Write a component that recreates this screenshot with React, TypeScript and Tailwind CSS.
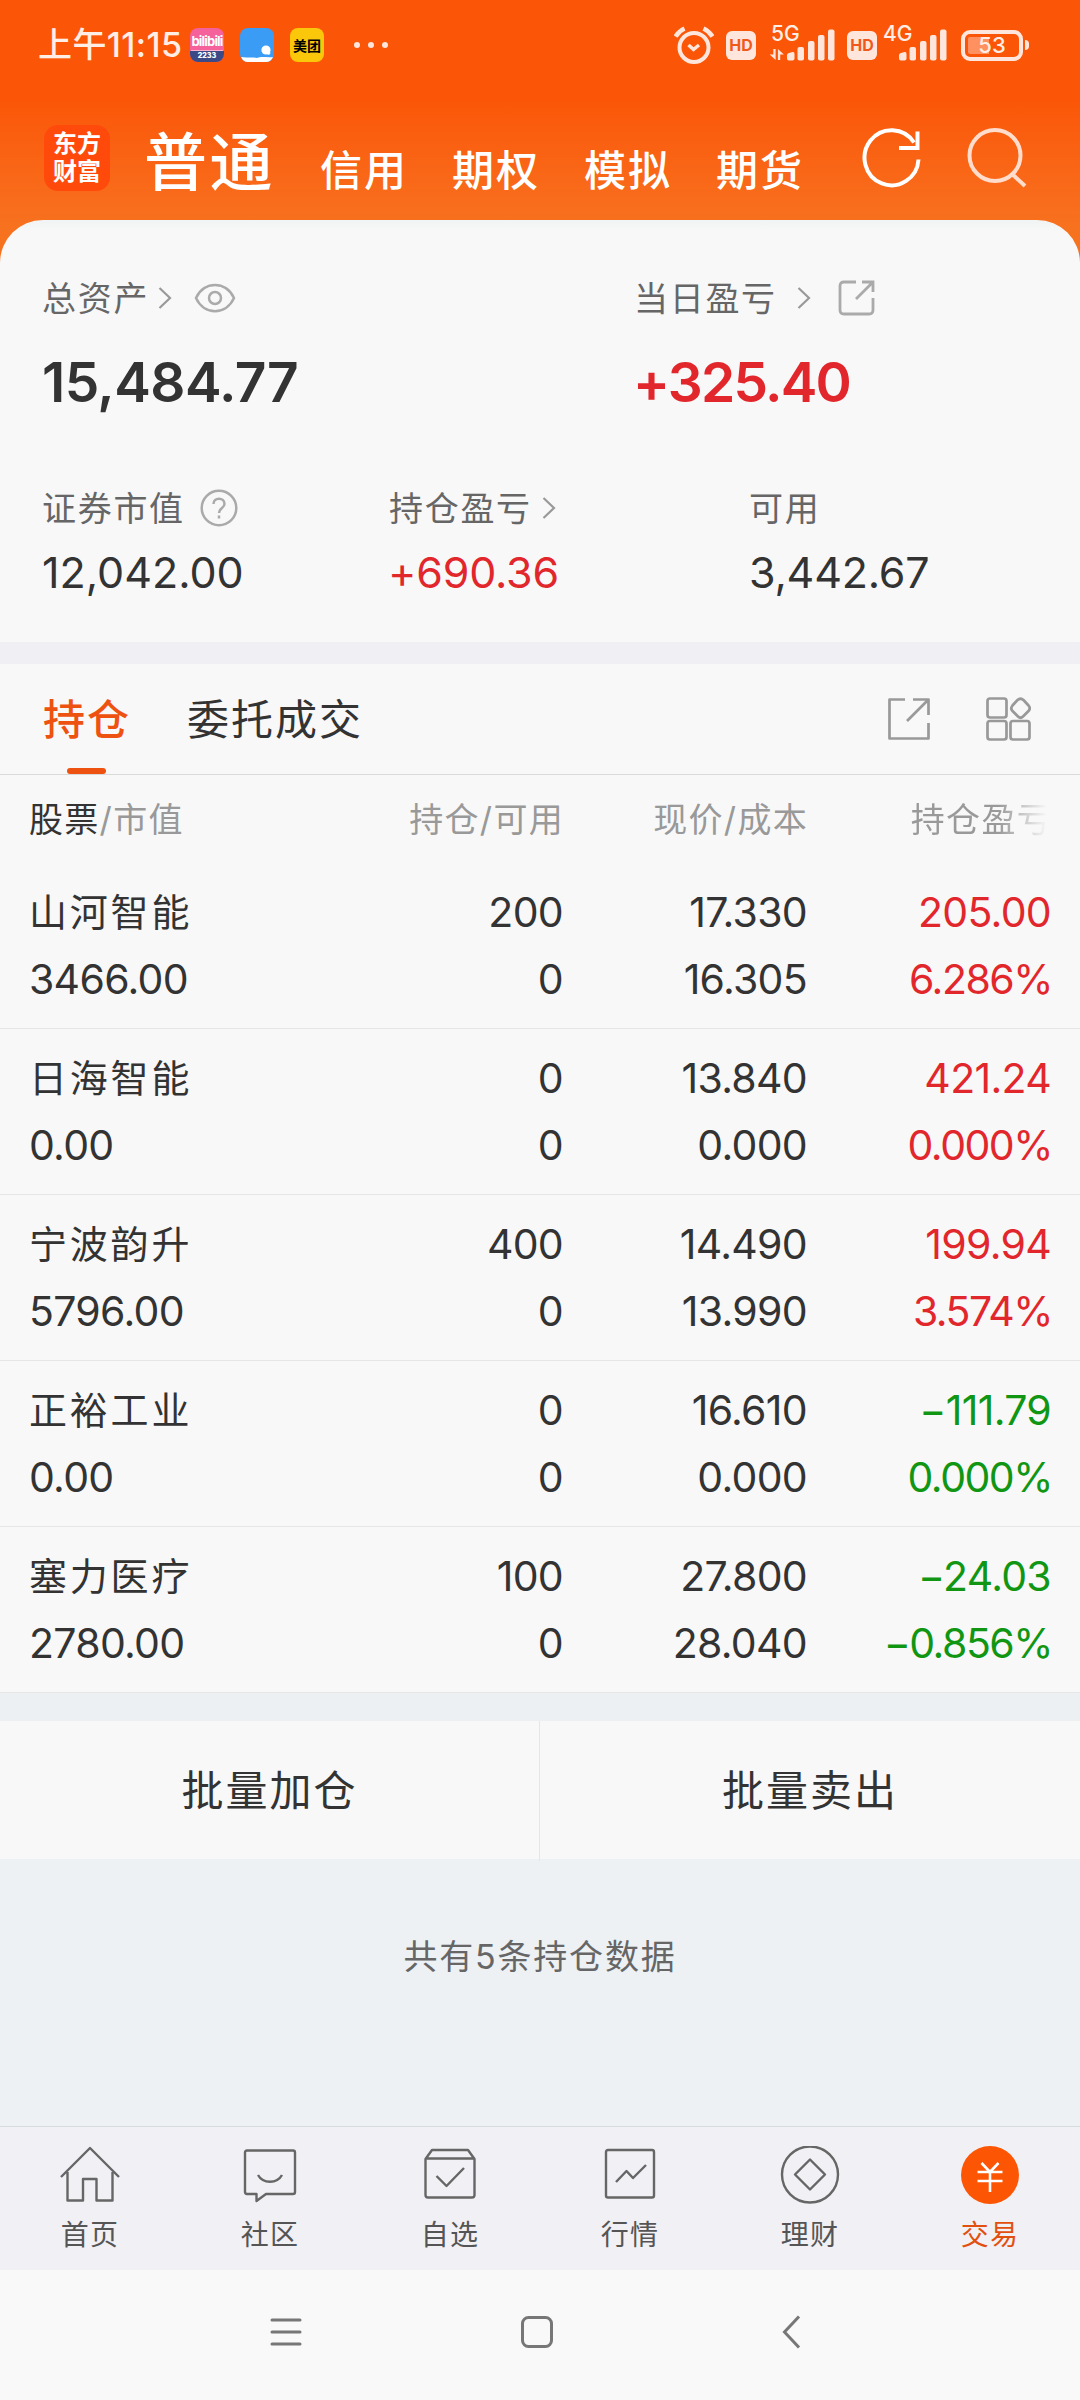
import React from "react";

const Chevron = ({ className = "" }) => (
  <svg className={className} width="14" height="22" viewBox="0 0 14 22" fill="none" stroke="#999" strokeWidth="2.2">
    <path d="M1.5 1 L12 11 L1.5 21" />
  </svg>
);

const Bars = () => (
  <svg width="48" height="32" viewBox="0 0 48 32" fill="#ffe6dc">
    <path d="M0 26 Q0 24.5 2 24 L5.5 23 Q7.5 22.5 7.5 25 V29.5 Q7.5 31.5 5.5 31.5 H2 Q0 31.5 0 29.5 Z" />
    <rect x="10.5" y="18" width="6.5" height="13.5" rx="2" />
    <rect x="21" y="12" width="6.5" height="19.5" rx="2" />
    <rect x="31" y="6" width="6.5" height="25.5" rx="2" />
    <rect x="41" y="0.5" width="6.5" height="31" rx="2" />
  </svg>
);

const Hd = () => (
  <div className="flex h-[29px] w-[30px] items-center justify-center rounded-[6px] bg-[#ffe6dc] text-[16px] font-bold text-[#ef5a1c]">
    HD
  </div>
);

const StatusBar = () => (
  <div className="flex h-[90px] items-center pl-[38px] pr-[51px] text-[#ffeee6]">
    <div className="w-[152px] whitespace-nowrap text-[34px] leading-[40px] font-medium tracking-[0.4px]">上午11:15</div>
    <div className="flex h-[34px] w-[34px] flex-col items-center overflow-hidden rounded-[8px] bg-[#f4619b]">
      <div className="h-[23px] border-b border-[#f9b4cf] text-[13px] leading-[27px] font-bold tracking-[-0.8px] text-white">bilibili</div>
      <div className="h-[11px] w-full bg-[#3b4a86] text-center text-[7px] leading-[10px] font-black text-white">2233</div>
    </div>
    <svg className="ml-4" width="34" height="34" viewBox="0 0 34 34">
      <rect width="34" height="34" rx="8" fill="#3b9cf5" />
      <path d="M1 29 C8 30 14 29 17 30 C22 28 28 30 33 29 C32 32 29 34 26 34 H8 C5 34 2 32 1 29 Z" fill="#fff" />
      <circle cx="26" cy="22" r="4.6" fill="#fff" />
      <circle cx="28.6" cy="25" r="1.8" fill="#fff" />
    </svg>
    <div className="ml-4 flex h-[34px] w-[34px] items-center justify-center rounded-[8px] bg-[#fbc70a] text-[14px] font-bold text-black">
      美团
    </div>
    <div className="ml-[30px] flex gap-2">
      <span className="size-[6px] rounded-full bg-[#ffe6dc]" />
      <span className="size-[6px] rounded-full bg-[#ffe6dc]" />
      <span className="size-[6px] rounded-full bg-[#ffe6dc]" />
    </div>
    <div className="ml-auto flex items-center">
      <svg className="mr-3" width="40" height="38" viewBox="0 0 40 38" fill="none" stroke="#ffe6dc" strokeWidth="4">
        <circle cx="20" cy="21.5" r="14.5" />
        <path d="M1.5 10.5 Q5 5 10.5 2.5 M38.5 10.5 Q35 5 29.5 2.5" strokeWidth="4.5" />
        <path d="M14.5 19 L19.5 23.5 L25 19" strokeWidth="3.5" />
      </svg>
      <Hd />
      <div className="relative ml-[31px]">
        <Bars />
        <span className="absolute -left-[16px] -top-[5px] text-[21px] leading-[20px] font-medium">5G</span>
        <svg className="absolute -left-[18px] top-[20px]" width="16" height="11" viewBox="0 0 16 12" fill="#ffe6dc">
          <path d="M4 0 H6.5 V12 L0 6 H4 Z M9 0 L15.5 6 H11.5 V12 H9 Z" />
        </svg>
      </div>
      <div className="ml-3">
        <Hd />
      </div>
      <div className="relative ml-[22px]">
        <Bars />
        <span className="absolute -left-[16px] -top-[5px] text-[21px] leading-[20px] font-medium">4G</span>
      </div>
      <div className="ml-[14px] flex items-center gap-[2px]">
        <div className="flex h-[31px] w-[62px] items-center justify-center rounded-[9px] border-4 border-[#ffe6dc] bg-linear-to-r from-[#ff9060] from-45% to-transparent to-45% bg-clip-content p-[3px] text-[22px] font-medium">
          53
        </div>
        <span className="h-[10px] w-[4px] rounded-r-sm bg-[#ffe6dc]" />
      </div>
    </div>
  </div>
);

const accounts = ["信用", "期权", "模拟", "期货"];

const Header = () => (
  <header className="flex h-[130px] pl-[44px] pr-[53px] text-white">
    <div className="mt-[35px] h-[66px] w-[66px] rounded-[14px] bg-[#ff4a0c] pt-[5px] text-center text-[24px] leading-[28px] font-bold">
      东方
      <br />
      财富
    </div>
    <div className="ml-[34px] mt-[37px] w-[174px] whitespace-nowrap text-[63px] leading-[70px] font-medium tracking-[2.5px]">普通</div>
    <div className="mt-[56px] flex pl-[2px]">
      {accounts.map((name) => (
        <div key={name} className="w-[132px] whitespace-nowrap text-[42px] leading-[50px] font-medium tracking-[2px]">
          {name}
        </div>
      ))}
    </div>
    <div className="ml-auto mt-[38px] flex gap-[43px]">
      <svg width="60" height="62" viewBox="0 0 60 62" fill="none" stroke="#fff" strokeWidth="4">
        <path d="M56.5 31.5 A27 27.5 0 1 1 52 14.5" />
        <path d="M55.5 3.5 V20 H37" />
      </svg>
      <svg width="62" height="62" viewBox="0 0 62 62" fill="none" stroke="#ffdccb" strokeWidth="4">
        <circle cx="30" cy="27.5" r="25.5" />
        <path d="M46 45 L60 58" />
      </svg>
    </div>
  </header>
);

const Summary = () => (
  <section className="h-[422px] rounded-t-[43px] bg-linear-to-b from-[#f1f4f4] to-[#f8f8f8] to-[12px] pl-[42px] pt-[53px] text-[#666]">
    <div className="flex h-[50px] items-center text-[34px] tracking-[1.7px]">
      <div className="flex w-[592px] items-center">
        总资产
        <Chevron className="ml-[9px]" />
        <svg className="ml-[22px]" width="42" height="30" viewBox="0 0 42 30" fill="none" stroke="#aaa" strokeWidth="2.5">
          <path d="M2 15 C10 -2.5 32 -2.5 40 15 C32 32.5 10 32.5 2 15 Z" />
          <circle cx="21" cy="15" r="6" />
        </svg>
      </div>
      当日盈亏
      <Chevron className="ml-[20px]" />
      <svg className="ml-[27px]" width="38" height="36" viewBox="0 0 38 36" fill="none" stroke="#aaa" strokeWidth="2.8">
        <path d="M18 2 H6 Q2 2 2 6 V30 Q2 34 6 34 H31 Q35 34 35 30 V18 M24 2 H35 V12 M35 2 L18 19" />
      </svg>
    </div>
    <div className="mt-[26px] flex h-[66px] items-center text-[55px] font-semibold text-[#333]">
      <div className="w-[591px] tracking-[-0.6px]">15,484.77</div>
      <div className="tracking-[-1.8px] text-[#e2272c]">+325.40</div>
    </div>
    <div className="mt-[68px] flex h-[50px] items-center text-[34px] tracking-[1.7px]">
      <div className="flex w-[347px] items-center">
        证券市值
        <svg className="ml-[15px]" width="38" height="38" viewBox="0 0 38 38" fill="none" stroke="#aaa" strokeWidth="2.5">
          <circle cx="19" cy="19" r="17.3" />
          <path d="M13.5 15 C13.5 8 24.5 8 24.5 15 C24.5 19 19 19 19 24 M19 26.5 V29.5" />
        </svg>
      </div>
      <div className="flex w-[360px] items-center">
        持仓盈亏
        <Chevron className="ml-[10px]" />
      </div>
      可用
    </div>
    <div className="mt-[14px] flex h-[50px] items-center text-[43px] tracking-[-0.2px] text-[#333]">
      <div className="w-[346px] tracking-normal">12,042.00</div>
      <div className="w-[361px] text-[#e2272c]">+690.36</div>
      <div>3,442.67</div>
    </div>
  </section>
);

const Tabs = () => (
  <div className="flex h-[111px] items-center border-b border-[#d9d9d9] pl-[43px] pr-[49px] text-[42px] tracking-[2px] text-[#333]">
    <div className="relative font-medium text-[#ee5210]">
      持仓
      <span className="absolute left-[24px] top-[80px] h-[6px] w-[39px] rounded-full bg-[#ee5210]" />
    </div>
    <div className="ml-[56px]">委托成交</div>
    <svg className="ml-auto" width="42" height="42" viewBox="0 0 42 42" fill="none" stroke="#999" strokeWidth="2.7" strokeLinejoin="round">
      <path d="M17 1.5 H1.5 V40.5 H40.5 V25 M25 1.5 H40.5 V17 M40.5 1.5 L19 23" />
    </svg>
    <svg className="ml-[56px]" width="45" height="44" viewBox="0 0 45 44" fill="none" stroke="#999" strokeWidth="2.7">
      <rect x="1.5" y="1.5" width="19" height="19" rx="2.5" />
      <rect x="1.5" y="24" width="19" height="18.5" rx="2.5" />
      <rect x="24.5" y="24" width="19" height="18.5" rx="2.5" />
      <path d="M31.5 3 Q34.5 0.5 37.5 3 L42.5 8.5 Q45 11.5 42.5 14 L37 19.5 Q34.5 22 32 19.5 L26.5 14 Q24 11.5 26.5 8.5 Z" />
    </svg>
  </div>
);

const holdings = [
  { name: "山河智能", value: "3466.00", amount: "200", usable: "0", price: "17.330", cost: "16.305", profit: "205.00", rate: "6.286%", up: true },
  { name: "日海智能", value: "0.00", amount: "0", usable: "0", price: "13.840", cost: "0.000", profit: "421.24", rate: "0.000%", up: true },
  { name: "宁波韵升", value: "5796.00", amount: "400", usable: "0", price: "14.490", cost: "13.990", profit: "199.94", rate: "3.574%", up: true },
  { name: "正裕工业", value: "0.00", amount: "0", usable: "0", price: "16.610", cost: "0.000", profit: "−111.79", rate: "0.000%", up: false },
  { name: "塞力医疗", value: "2780.00", amount: "100", usable: "0", price: "27.800", cost: "28.040", profit: "−24.03", rate: "−0.856%", up: false },
];

const Holdings = () => (
  <section>
    <div className="grid h-[88px] grid-cols-[264px_271px_244px_244px] pl-[29px] pt-[20px] text-right text-[34px] leading-[50px] tracking-[1.3px] text-[#999]">
      <div className="text-left">
        <span className="text-[#333]">股票</span>/市值
      </div>
      <div>持仓/可用</div>
      <div>现价/成本</div>
      <div className="bg-linear-to-r from-[#999] from-78% to-transparent to-98% bg-clip-text text-transparent">持仓盈亏</div>
    </div>
    {holdings.map((h) => (
      <div
        key={h.name}
        className="grid h-[166px] grid-cols-[264px_270px_244px_244px] content-start border-b border-[#e6e6e6] pl-[29px] pt-[16px] text-right text-[41px] leading-[67px] tracking-[-0.7px] text-[#333]"
      >
        <div className="text-left text-[38px] tracking-[2.8px]">{h.name}</div>
        <div>{h.amount}</div>
        <div>{h.price}</div>
        <div className={h.up ? "text-[#e2272c]" : "text-[#109613]"}>{h.profit}</div>
        <div className="text-left">{h.value}</div>
        <div>{h.usable}</div>
        <div>{h.cost}</div>
        <div className={h.up ? "-mr-px tracking-[-1.5px] text-[#e2272c]" : "-mr-px tracking-[-1.5px] text-[#109613]"}>{h.rate}</div>
      </div>
    ))}
  </section>
);

const navItems = [
  {
    label: "首页",
    icon: <path d="M1 31 L30 2 L59 31 M7.5 26 V54.5 H23 V33 H36.5 V54.5 H52.5 V26" />,
  },
  {
    label: "社区",
    icon: <path d="M7 4.5 H53 Q55 4.5 55 6.5 V46 Q55 48 53 48 H26 L16.5 55 V48 H7 Q5 48 5 46 V6.5 Q5 4.5 7 4.5 Z M18 29 C23 38 37 38 42 29" />,
  },
  {
    label: "自选",
    icon: <path d="M5.5 13 L12 4 H48 L54.5 13 V49 Q54.5 51.5 52 51.5 H8 Q5.5 51.5 5.5 49 Z M5.5 12.5 H54.5 M16.5 30 L26.5 40 L44 22" />,
  },
  {
    label: "行情",
    icon: <path d="M8 4 H52 Q54 4 54 6 V49.5 Q54 51.5 52 51.5 H8 Q6 51.5 6 49.5 V6 Q6 4 8 4 Z M16 36 L26.5 25 L33 32 L46 19" />,
  },
  {
    label: "理财",
    icon: (
      <>
        <circle cx="30" cy="28.5" r="28" />
        <path d="M30 13.5 L45 28.5 L30 43.5 L15 28.5 Z" />
      </>
    ),
  },
];

const BottomNav = () => (
  <nav className="grid h-[144px] grid-cols-6 border-t border-[#d4dcde] bg-[#f1f0f4] pt-[19px] text-center text-[28px] leading-[40px] tracking-[1.2px] text-[#555]">
    {navItems.map((item) => (
      <div key={item.label} className="flex flex-col items-center">
        <svg width="60" height="60" viewBox="0 0 60 60" fill="none" stroke="#666" strokeWidth="2.4" strokeLinejoin="round">
          {item.icon}
        </svg>
        <span className="mt-[9px]">{item.label}</span>
      </div>
    ))}
    <div className="flex flex-col items-center text-[#e2500f]">
      <svg width="60" height="60" viewBox="0 0 60 60" fill="none" stroke="#fff" strokeWidth="2.6">
        <circle cx="30" cy="29" r="29" fill="#fc5503" stroke="none" />
        <path d="M21.5 17 L30 26 L38.5 17 M17.5 26 H42.5 M17.5 35 H42.5 M30 26 V46" />
      </svg>
      <span className="mt-[9px]">交易</span>
    </div>
  </nav>
);

const SystemNav = () => (
  <div className="flex h-[130px] items-start bg-[#f9f9f9] pl-[270px] pt-[45px]">
    <svg width="32" height="34" viewBox="0 0 32 34" stroke="#777" strokeWidth="3" strokeLinecap="round">
      <path d="M2 5 H30 M2 17 H30 M2 29 H30" />
    </svg>
    <svg className="ml-[218px]" width="34" height="34" viewBox="0 0 34 34" fill="none" stroke="#777" strokeWidth="3">
      <rect x="2.5" y="2.5" width="29" height="29" rx="6" />
    </svg>
    <svg className="ml-[227px]" width="20" height="34" viewBox="0 0 20 34" fill="none" stroke="#777" strokeWidth="3">
      <path d="M18 1.5 L3.5 17 L18 32.5" />
    </svg>
  </div>
);

const App = () => {
  return (
    <div className="h-[2400px] w-[1080px] overflow-hidden bg-[#f8f8f8] font-['Inter','Noto_Sans_CJK_SC',sans-serif]">
      <div className="bg-linear-to-b from-[#fb5607] from-[100px] to-[#f7721f] to-[230px]">
        <StatusBar />
        <Header />
        <Summary />
      </div>
      <div className="h-[22px] bg-[#f0eff3]" />
      <Tabs />
      <Holdings />
      <div className="h-[28px] bg-[#edf0f3]" />
      <div className="grid h-[138px] grid-cols-2 text-center text-[42px] leading-[140px] tracking-[2px] text-[#333]">
        <div className="border-r border-[#e6e6e6]">批量加仓</div>
        <div>批量卖出</div>
      </div>
      <div className="h-[267px] bg-[#edf1f4] pt-[73px] text-center text-[34px] leading-[50px] tracking-[1.8px] text-[#666]">
        共有5条持仓数据
      </div>
      <BottomNav />
      <SystemNav />
    </div>
  );
};

export default App;
